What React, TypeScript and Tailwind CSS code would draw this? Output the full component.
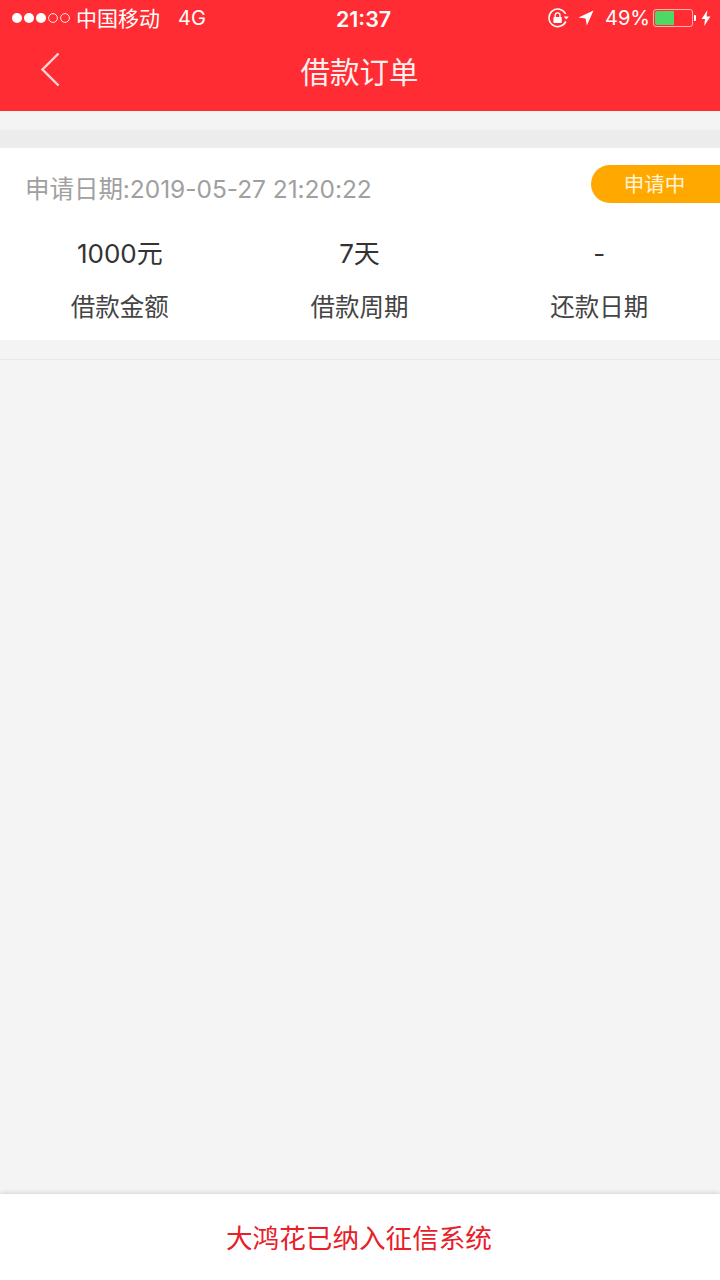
import React from "react";

const sans = "font-['Inter','Liberation_Sans','Noto_Sans_CJK_SC',sans-serif]";

// Carrier signal: three filled dots and two hollow ones
function SignalDots() {
  return (
    <svg width="60" height="12" viewBox="0 0 60 12" className="block">
      {[6, 18, 30].map((x) => (
        <circle key={x} cx={x} cy="6" r="5" fill="#fff" />
      ))}
      {[42, 54].map((x) => (
        <circle key={x} cx={x} cy="6" r="4.4" fill="none" stroke="#fff" strokeOpacity="0.85" strokeWidth="1" />
      ))}
    </svg>
  );
}

function RotationLock() {
  return (
    <svg width="21" height="20" viewBox="0 0 21 20" className="block">
      <path d="M17.8 13.4A8.8 8.8 0 1 1 17.6 5.8" fill="none" stroke="#fff" strokeWidth="1.5" />
      <path d="M15.8 8.4h5l-2.5 3.2z" fill="#fff" />
      <rect x="5.4" y="9" width="8.4" height="6" rx="1" fill="#fff" />
      <path d="M7.2 9V7.2a2.4 2.4 0 0 1 4.8 0V9" fill="none" stroke="#fff" strokeWidth="1.3" />
    </svg>
  );
}

function LocationArrow() {
  return (
    <svg width="16" height="16" viewBox="0 0 16 16" className="block">
      <path d="M15.5 0.5 0.5 7.4l7 1 1.4 7.1z" fill="#fff" />
    </svg>
  );
}

function Battery() {
  return (
    <div className="flex items-center">
      <div className="h-[18px] w-[40px] rounded-[3px] border border-[#ffb3b5] p-[1px]">
        <div className="h-full w-[19px] rounded-l-[2px] bg-[#4cd964]" />
      </div>
      <div className="ml-[1px] h-[6px] w-[2px] rounded-r-[1px] bg-white" />
    </div>
  );
}

function Bolt() {
  return (
    <svg width="10" height="16" viewBox="0 0 10 16" className="block">
      <path d="M6.4 0 0.6 9h3.4L3.2 16 9.4 6.6H5.6z" fill="#fff" />
    </svg>
  );
}

function StatCell({ value, label }: { value: string; label: string }) {
  return (
    <div className="flex flex-col items-center">
      <div className="text-[26px] leading-[36px] text-[#333333]">{value}</div>
      <div className="mt-[17px] text-[24.5px] leading-[36px] text-[#444444]">{label}</div>
    </div>
  );
}

export default function App() {
  return (
    <div className={`flex h-[1280px] w-[720px] flex-col overflow-hidden bg-[#f4f4f4] ${sans}`}>
      <header className="h-[111px] shrink-0 bg-[#ff2d33] text-white">
        <div className="relative flex h-[36px] items-center justify-between pl-[11px] pr-[9px]">
          <div className="flex items-center">
            <SignalDots />
            <span className="ml-[5px] text-[21px] leading-none">中国移动</span>
            <span className="ml-[18px] text-[20px] leading-none">4G</span>
          </div>
          <span className="absolute left-[336px] top-[7px] text-[21.4px] font-semibold leading-[24px]">21:37</span>
          <div className="flex items-center">
            <RotationLock />
            <span className="ml-[9px]">
              <LocationArrow />
            </span>
            <span className="ml-[11px] text-[20px] leading-none">49%</span>
            <span className="ml-[3px]">
              <Battery />
            </span>
            <span className="ml-[5px]">
              <Bolt />
            </span>
          </div>
        </div>
        <div className="relative flex h-[75px] items-start justify-center">
          <svg width="22" height="36" viewBox="0 0 22 36" className="absolute left-[40px] top-[16px]">
            <path d="M18.5 1.5 2.5 17.5l16 16" fill="none" stroke="#ffd6d7" strokeWidth="2.4" />
          </svg>
          <h1 className="mt-[16px] pr-[1px] text-[29.5px] font-normal leading-[40px] text-[#fff0f0]">借款订单</h1>
        </div>
      </header>

      <div className="mt-[19px] h-[18px] shrink-0 bg-[#ececec]" />

      <section className="h-[192px] shrink-0 bg-white">
        <div className="flex h-[88px] items-start justify-between">
          <div className="ml-[25px] mt-[23px] text-[24.5px] leading-[36px] tracking-[-0.04px] text-[#a0a0a0]">申请日期:2019-05-27 21:20:22</div>
          <div className="mt-[17px] flex h-[38px] w-[129px] items-center justify-center rounded-l-full bg-[#ffa900] pr-[2px] pt-[2px] text-[20.5px] text-[#fff3d6]">
            申请中
          </div>
        </div>
        <div className="grid grid-cols-3 pr-[1px]">
          <StatCell value="1000元" label="借款金额" />
          <StatCell value="7天" label="借款周期" />
          <StatCell value="-" label="还款日期" />
        </div>
      </section>

      <div className="mt-[19px] h-px shrink-0 bg-[#e8e8e8]" />

      <div className="flex-1" />

      <footer className="flex h-[86px] shrink-0 items-center justify-center bg-white pr-[2px] pt-[3px] text-[26.6px] text-[#e8202a] shadow-[0_-1px_5px_rgba(0,0,0,0.14)]">
        大鸿花已纳入征信系统
      </footer>
    </div>
  );
}
